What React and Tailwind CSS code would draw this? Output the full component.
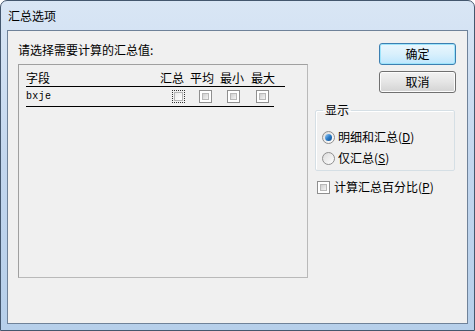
import React from "react";

const font = { fontFamily: '"Noto Sans CJK SC", "Liberation Sans", sans-serif' };

function Check({ focus }) {
  if (focus) {
    return (
      <div className="w-[13px] h-[13px] border border-dotted border-[#333] p-[1px] shrink-0">
        <div className="w-full h-full bg-gradient-to-br from-[#e9e9e9] to-[#ffffff] border border-[#b5b5b5]" />
      </div>
    );
  }
  return (
    <div className="w-[13px] h-[13px] border border-[#8f8f8f] bg-white p-[2px] shrink-0">
      <div className="w-full h-full bg-gradient-to-br from-[#d0d0d0] to-[#f4f4f4] border border-[#b8b8b8]" />
    </div>
  );
}

function Radio({ checked }) {
  return (
    <div className="w-[13px] h-[13px] rounded-full border border-[#8f8f8f] bg-gradient-to-br from-[#dcdcdc] to-[#ffffff] flex items-center justify-center shrink-0">
      {checked && (
        <div className="w-[7px] h-[7px] rounded-full bg-gradient-to-br from-[#9fd1f5] via-[#2b7dc9] to-[#124c8a]" />
      )}
    </div>
  );
}

function Btn({ children, def }) {
  return (
    <div
      className={
        "w-[77px] h-[22px] rounded-[3px] border flex items-center justify-center text-[12px] text-black " +
        (def
          ? "border-[#3c7fb1] shadow-[inset_0_0_0_1px_#9ee4fb] bg-gradient-to-b from-[#eaf6fd] via-[#d9f0fc] to-[#bee6fd]"
          : "border-[#707070] shadow-[inset_0_0_0_1px_#fcfcfc] bg-gradient-to-b from-[#f2f2f2] via-[#e5e5e5] to-[#d3d3d3]")
      }
    >
      {children}
    </div>
  );
}

function U({ c }) {
  return (
    <span>
      (<span className="underline">{c}</span>)
    </span>
  );
}

export default function App() {
  return (
    <div style={font} className="w-[475px] h-[331px] flex flex-col bg-gradient-to-b from-[#d9e6f5] via-[#c2d6ee] to-[#b6cfea] border border-[#44576e] rounded-t-[7px] overflow-hidden">
      <div className="h-[29px] shrink-0 flex items-center pl-[7px] text-[12px] text-black">汇总选项</div>
      <div className="mx-[6px] h-[294px] shrink-0 border border-[#6f8299] bg-[#f0f0f0] flex text-[12px] leading-[16px] text-black">
        <div className="ml-[10px] w-[290px] flex flex-col">
          <div className="mt-[11px] h-[16px]">请选择需要计算的汇总值:</div>
          <div className="mt-[6px] w-[290px] h-[214px] border border-[#a0a0a0] border-r-[#b9b9b9] border-b-[#b9b9b9] pl-[7px]">
            <div className="mt-[5px] w-[259px] flex border-b border-black h-[17px]">
              <span className="w-[134px]">字段</span>
              <span className="w-[30px]">汇总</span>
              <span className="w-[30px]">平均</span>
              <span className="w-[31px]">最小</span>
              <span className="w-[34px]">最大</span>
            </div>
            <div className="w-[248px] h-[20px] flex items-center border-b border-black">
              <span className="w-[146px] text-[10px] tracking-[0.3px] pt-[1px]" style={{ fontFamily: '"Liberation Mono", monospace' }}>bxje</span>
              <Check focus />
              <div className="ml-[14px]"><Check /></div>
              <div className="ml-[15px]"><Check /></div>
              <div className="ml-[16px]"><Check /></div>
            </div>
          </div>
        </div>
        <div className="ml-[7px] w-[141px] flex flex-col">
          <div className="mt-[12px] self-end"><Btn def>确定</Btn></div>
          <div className="mt-[6px] self-end"><Btn>取消</Btn></div>
          <fieldset className="mt-[9px] w-[140px] border border-[#d5dfe5] shadow-[inset_1px_1px_0_#ffffff] rounded-[2px] px-[6px] pb-[2px]">
            <legend className="px-[2px] ml-[1px] leading-[16px]">显示</legend>
            <div className="mt-[9px] h-[20px] flex items-center gap-[3px]">
              <Radio checked />
              <span>明细和汇总<U c="D" /></span>
            </div>
            <div className="mt-[1px] h-[20px] flex items-center gap-[3px]">
              <Radio />
              <span>仅汇总<U c="S" /></span>
            </div>
          </fieldset>
          <div className="mt-[6px] ml-[2px] h-[20px] flex items-center gap-[4px]">
            <Check />
            <span>计算汇总百分比<U c="P" /></span>
          </div>
        </div>
      </div>
      <div className="flex-1" />
    </div>
  );
}
